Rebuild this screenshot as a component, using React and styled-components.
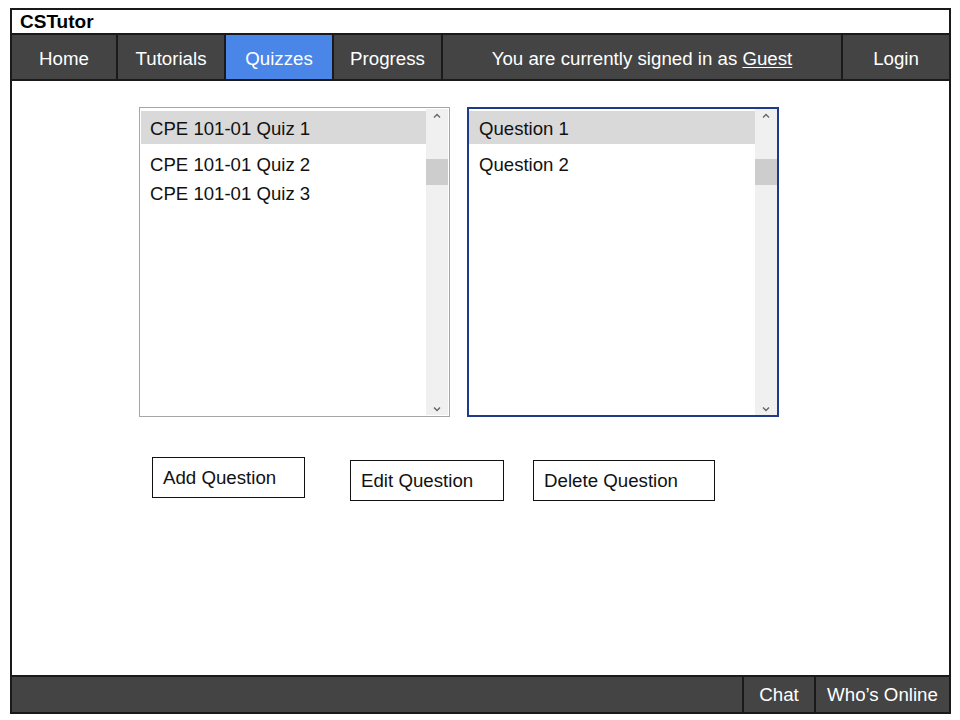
import React from 'react';
import styled, { createGlobalStyle } from 'styled-components';

const colors = {
    dark: '#444444',
    line: '#1a1a1a',
    blue: '#4a86e8',
    select: '#d9d9d9',
    track: '#f0f0f0',
    thumb: '#cdcdcd',
    listBorder: '#a6a6a6',
    focus: '#1f3a86'
};

const GlobalStyle = createGlobalStyle`
    html, body {
        margin: 0;
        padding: 0;
        background: #ffffff;
    }
    body {
        font-family: "Liberation Sans", Arial, sans-serif;
    }
    * {
        box-sizing: border-box;
    }
`

const Frame = styled.div`
    margin: 8px 0 0 10px;
    width: 941px;
    height: 706px;
    border: 2px solid ${colors.line};
    display: flex;
    flex-direction: column;
    background: #fff;
`

const TitleBar = styled.div`
    height: 23px;
    padding-left: 8px;
    font-weight: bold;
    font-size: 19px;
    line-height: 23px;
    color: #000;
`

const NavBar = styled.div`
    height: 48px;
    display: flex;
    background: ${colors.dark};
    border-top: 2px solid ${colors.line};
    border-bottom: 2px solid ${colors.line};
`

const NavItem = styled.div`
    width: ${props => props.width ? props.width + 'px' : 'auto'};
    flex: ${props => props.width ? 'none' : 1};
    display: flex;
    align-items: center;
    justify-content: center;
    padding-top: 3px;
    color: #fff;
    font-size: 18.7px;
    background: ${props => props.active ? colors.blue : colors.dark};
    border-right: ${props => props.last ? 'none' : `2px solid ${colors.line}`};

    u {
        text-decoration: underline;
        text-underline-offset: 2px;
    }
`

const Main = styled.div`
    flex: 1;
    padding: 26px 0 0 127px;
`

const ListRow = styled.div`
    display: flex;
    gap: 17px;
`

const ListBox = styled.div`
    width: ${props => props.width}px;
    height: 310px;
    border: ${props => props.focused ? `2px solid ${colors.focus}` : `1px solid ${colors.listBorder}`};
    display: flex;
    padding: ${props => props.focused ? '0' : '1px'};
    background: #fff;
`

const Items = styled.div`
    flex: 1;
    padding-top: 2px;
`

const Item = styled.div`
    height: ${props => props.selected ? '33px' : '29px'};
    margin-bottom: ${props => props.selected ? '5px' : '0'};
    padding: 2px 0 0 ${props => props.indent}px;
    display: flex;
    align-items: center;
    font-size: 18.6px;
    color: #111;
    background: ${props => props.selected ? colors.select : 'transparent'};
`

const Scrollbar = styled.div`
    width: 22px;
    background: ${colors.track};
    display: flex;
    flex-direction: column;
    align-items: center;
    padding: 4px 0 3px;
`

const Thumb = styled.div`
    width: 22px;
    height: 26px;
    margin-top: 40px;
    background: ${colors.thumb};
`

const Spacer = styled.div`
    flex: 1;
`

const ButtonRow = styled.div`
    display: flex;
    align-items: flex-start;
    margin-top: 40px;
    padding-left: 13px;
`

const Button = styled.div`
    width: ${props => props.width}px;
    height: 41px;
    margin-left: ${props => props.gap || 0}px;
    margin-top: ${props => props.drop || 0}px;
    border: 1px solid #111;
    display: flex;
    align-items: center;
    padding-left: 10px;
    font-size: 18.7px;
    color: #111;
`

const Footer = styled.div`
    height: 37px;
    display: flex;
    justify-content: flex-end;
    background: ${colors.dark};
    border-top: 2px solid ${colors.line};
`

const FooterItem = styled.div`
    width: ${props => props.width}px;
    display: flex;
    align-items: center;
    justify-content: center;
    color: #fff;
    font-size: 18.7px;
    border-left: 2px solid ${colors.line};
`

const Caret = ({ down }) => (
    <svg width="8" height="6" viewBox="0 0 8 6">
        <path
            d={down ? 'M1 1.5 L4 4.5 L7 1.5' : 'M1 4.5 L4 1.5 L7 4.5'}
            fill="none"
            stroke="#666"
            strokeWidth="1.4" />
    </svg>
);

const List = ({ width, focused, items, indent }) => (
    <ListBox width={width} focused={focused}>
        <Items>
            {items.map((item, i) => (
                <Item key={item} selected={i === 0} indent={indent}>{item}</Item>
            ))}
        </Items>
        <Scrollbar>
            <Caret />
            <Thumb />
            <Spacer />
            <Caret down />
        </Scrollbar>
    </ListBox>
);

const quizzes = ['CPE 101-01 Quiz 1', 'CPE 101-01 Quiz 2', 'CPE 101-01 Quiz 3'];
const questions = ['Question 1', 'Question 2'];

export default function App() {
    return (
        <>
            <GlobalStyle />
            <Frame>
                <TitleBar>CSTutor</TitleBar>
                <NavBar>
                    <NavItem width={106}>Home</NavItem>
                    <NavItem width={108}>Tutorials</NavItem>
                    <NavItem width={108} active>Quizzes</NavItem>
                    <NavItem width={109}>Progress</NavItem>
                    <NavItem width={400}>
                        <span>You are currently signed in as <u>Guest</u></span>
                    </NavItem>
                    <NavItem last>Login</NavItem>
                </NavBar>

                <Main>
                    <ListRow>
                        <List width={311} items={quizzes} indent={9} />
                        <List width={312} items={questions} indent={10} focused />
                    </ListRow>

                    <ButtonRow>
                        <Button width={153}>Add Question</Button>
                        <Button width={154} gap={45} drop={3}>Edit Question</Button>
                        <Button width={182} gap={29} drop={3}>Delete Question</Button>
                    </ButtonRow>
                </Main>

                <Footer>
                    <FooterItem width={72}>Chat</FooterItem>
                    <FooterItem width={135}>Who’s Online</FooterItem>
                </Footer>
            </Frame>
        </>
    );
}
